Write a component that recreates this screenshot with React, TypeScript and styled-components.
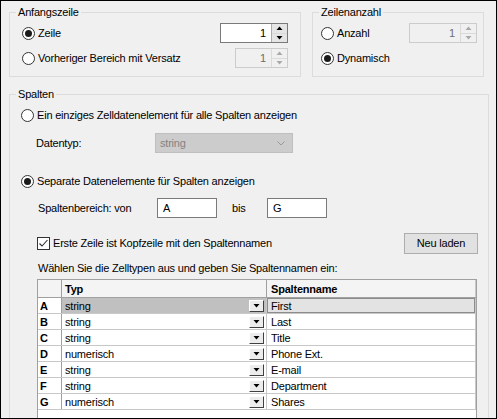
import React from "react";
import styled, { createGlobalStyle } from "styled-components";

const GlobalStyle = createGlobalStyle`
  html, body { margin: 0; padding: 0; background: #f0f0f0; }
  body {
    font-family: "Liberation Sans", Arial, sans-serif;
    font-size: 11px;
    letter-spacing: -0.2px;
    color: #000;
  }
  * { box-sizing: border-box; }
`;

const Frame = styled.div`
  width: 497px;
  height: 419px;
  border: 1px solid #000;
  background: #f0f0f0;
  padding: 5px 8px 0 8px;
  overflow: hidden;
  display: flex;
  flex-direction: column;
  gap: 11px;
`;

const TopRow = styled.div`
  display: flex;
  gap: 11px;
`;

const Group = styled.fieldset<{ $width: number }>`
  margin: 0;
  padding: 0;
  min-width: 0;
  width: ${(p) => p.$width}px;
  border: 1px solid #dcdcdc;
  flex-shrink: 0;
`;

const Legend = styled.legend`
  margin-left: 6px;
  padding: 0 2px;
  line-height: 13px;
  font-size: 11px;
`;

const GroupBody = styled.div<{ $pad: string }>`
  padding: ${(p) => p.$pad};
  display: flex;
  flex-direction: column;
`;

const Row = styled.div<{ $gap?: number; $indent?: number }>`
  display: flex;
  align-items: center;
  height: 20px;
  margin-top: ${(p) => p.$gap ?? 0}px;
  padding-left: ${(p) => p.$indent ?? 0}px;
  justify-content: space-between;
`;

const Left = styled.div`
  display: flex;
  align-items: center;
`;

/* radio */
const RadioLabel = styled.label`
  display: inline-flex;
  align-items: center;
  gap: 3px;
  white-space: nowrap;
`;

const RadioCircle = styled.span<{ $checked?: boolean }>`
  width: 13px;
  height: 13px;
  border-radius: 50%;
  border: 1px solid #333;
  background: #fff;
  display: inline-flex;
  align-items: center;
  justify-content: center;
  &::after {
    content: "";
    width: 7px;
    height: 7px;
    border-radius: 50%;
    background: ${(p) => (p.$checked ? "#1a1a1a" : "transparent")};
  }
`;

const Radio = ({ label, checked }: { label: string; checked?: boolean }) => (
  <RadioLabel>
    <RadioCircle $checked={checked} />
    <span>{label}</span>
  </RadioLabel>
);

/* spin box */
const SpinBox = styled.div<{ $width: number; $disabled?: boolean }>`
  width: ${(p) => p.$width}px;
  height: 20px;
  display: flex;
  border: 1px solid ${(p) => (p.$disabled ? "#cccccc" : "#7a7a7a")};
  background: ${(p) => (p.$disabled ? "#f0f0f0" : "#fff")};
`;

const SpinValue = styled.div<{ $disabled?: boolean }>`
  flex: 1;
  text-align: right;
  padding-right: 5px;
  line-height: 18px;
  color: ${(p) => (p.$disabled ? "#6d6d6d" : "#000")};
`;

const SpinButtons = styled.div<{ $disabled?: boolean }>`
  width: 16px;
  display: flex;
  flex-direction: column;
  border-left: 1px solid ${(p) => (p.$disabled ? "#dadada" : "#acacac")};
  background: ${(p) => (p.$disabled ? "#f0f0f0" : "#e5e5e5")};
`;

const SpinButton = styled.div<{ $disabled?: boolean }>`
  flex: 1;
  display: flex;
  align-items: center;
  justify-content: center;
  & + & {
    border-top: 1px solid ${(p) => (p.$disabled ? "#dadada" : "#acacac")};
  }
`;

const Arrow = ({ up, color }: { up?: boolean; color: string }) => (
  <svg width="7" height="4" viewBox="0 0 7 4">
    <polygon points={up ? "0.5,4 3.5,0.5 6.5,4" : "0.5,0 3.5,3.5 6.5,0"} fill={color} />
  </svg>
);

const Spinner = ({ width, disabled }: { width: number; disabled?: boolean }) => {
  const c = disabled ? "#a8a8a8" : "#000";
  return (
    <SpinBox $width={width} $disabled={disabled}>
      <SpinValue $disabled={disabled}>1</SpinValue>
      <SpinButtons $disabled={disabled}>
        <SpinButton $disabled={disabled}>
          <Arrow up color={c} />
        </SpinButton>
        <SpinButton $disabled={disabled}>
          <Arrow color={c} />
        </SpinButton>
      </SpinButtons>
    </SpinBox>
  );
};

/* fields */
const FieldLabel = styled.span<{ $width: number; $pad?: number }>`
  width: ${(p) => p.$width}px;
  padding-left: ${(p) => p.$pad ?? 0}px;
  flex-shrink: 0;
`;

const Combo = styled.div`
  width: 138px;
  height: 20px;
  background: #cccccc;
  border: 1px solid #bfbfbf;
  color: #838383;
  display: flex;
  align-items: center;
  justify-content: space-between;
  padding: 0 7px 0 4px;
`;

const TextBox = styled.div`
  width: 60px;
  height: 20px;
  background: #fff;
  border: 1px solid #7a7a7a;
  padding-left: 5px;
  line-height: 18px;
`;

const CheckLabel = styled.label`
  display: inline-flex;
  align-items: center;
  gap: 3px;
`;

const CheckBox = styled.span`
  width: 13px;
  height: 13px;
  border: 1px solid #333;
  background: #fff;
  display: inline-flex;
  align-items: center;
  justify-content: center;
`;

const Button = styled.button`
  width: 74px;
  height: 21px;
  background: #e1e1e1;
  border: 1px solid #adadad;
  font: inherit;
  letter-spacing: inherit;
  color: #000;
  padding: 0;
`;

const Hint = styled.div`
  margin-top: 8px;
  padding-left: 17px;
  line-height: 14px;
`;

/* grid */
const Grid = styled.div`
  margin: 4px 0 0 16px;
  width: 440px;
  height: 160px;
  border: 1px solid #a0a0a0;
  border-bottom: none;
  background: #fff;
`;

const GridRow = styled.div<{ $header?: boolean }>`
  display: grid;
  grid-template-columns: 24px 205px 209px;
  height: ${(p) => (p.$header ? 18 : 16)}px;
  border-bottom: 1px solid ${(p) => (p.$header ? "#a0a0a0" : "#c8c8c8")};
  background: ${(p) => (p.$header ? "#f4f4f4" : "#fff")};
`;

const HeadCell = styled.div`
  border-right: 1px solid #a0a0a0;
  font-weight: bold;
  padding-left: 2px;
  display: flex;
  align-items: center;
`;

const TypeCell = styled.div<{ $selected?: boolean; $header?: boolean }>`
  border-right: 1px solid ${(p) => (p.$header ? "#a0a0a0" : "#c8c8c8")};
  background: ${(p) => (p.$selected ? "#c0c0c0" : "transparent")};
  font-weight: ${(p) => (p.$header ? "bold" : "normal")};
  display: flex;
  align-items: center;
  justify-content: space-between;
  padding: 0 2px 0 3px;
`;

const NameCell = styled.div<{ $selected?: boolean; $header?: boolean }>`
  border-right: 1px solid #c8c8c8;
  background: ${(p) => (p.$selected ? "#e3e3e3" : "transparent")};
  box-shadow: ${(p) => (p.$selected ? "inset 0 0 0 1px #8c8c8c" : "none")};
  font-weight: ${(p) => (p.$header ? "bold" : "normal")};
  display: flex;
  align-items: center;
  padding-left: 4px;
`;

const DropButton = styled.span`
  width: 15px;
  height: 12px;
  background: #ececec;
  border: 1px solid;
  border-color: #fff #404040 #404040 #fff;
  display: inline-flex;
  align-items: center;
  justify-content: center;
`;

const rows: [string, string, string][] = [
  ["A", "string", "First"],
  ["B", "string", "Last"],
  ["C", "string", "Title"],
  ["D", "numerisch", "Phone Ext."],
  ["E", "string", "E-mail"],
  ["F", "string", "Department"],
  ["G", "numerisch", "Shares"],
];

export default function App() {
  return (
    <>
      <GlobalStyle />
      <Frame>
        <TopRow>
          <Group $width={292}>
            <Legend>Anfangszeile</Legend>
            <GroupBody $pad="4px 12px 8px 12px">
              <Row>
                <Radio label="Zeile" checked />
                <Spinner width={68} />
              </Row>
              <Row $gap={5}>
                <Radio label="Vorheriger Bereich mit Versatz" />
                <Spinner width={53} disabled />
              </Row>
            </GroupBody>
          </Group>
          <Group $width={172}>
            <Legend>Zeilenanzahl</Legend>
            <GroupBody $pad="4px 6px 8px 8px">
              <Row>
                <Radio label="Anzahl" />
                <Spinner width={68} disabled />
              </Row>
              <Row $gap={5}>
                <Radio label="Dynamisch" checked />
              </Row>
            </GroupBody>
          </Group>
        </TopRow>

        <Group $width={480}>
          <Legend>Spalten</Legend>
          <GroupBody $pad="4px 10px 0 11px">
            <Row>
              <Radio label="Ein einziges Zelldatenelement für alle Spalten anzeigen" />
            </Row>
            <Row $gap={8} $indent={15}>
              <Left>
                <FieldLabel $width={119}>Datentyp:</FieldLabel>
                <Combo>
                  <span>string</span>
                  <svg width="8" height="5" viewBox="0 0 8 5">
                    <polyline points="0.5,0.5 4,4 7.5,0.5" fill="none" stroke="#9a9a9a" strokeWidth="1" />
                  </svg>
                </Combo>
              </Left>
            </Row>
            <Row $gap={18}>
              <Radio label="Separate Datenelemente für Spalten anzeigen" checked />
            </Row>
            <Row $gap={7} $indent={17}>
              <Left>
                <FieldLabel $width={119}>Spaltenbereich: von</FieldLabel>
                <TextBox>A</TextBox>
                <FieldLabel $width={50} $pad={15}>
                  bis
                </FieldLabel>
                <TextBox>G</TextBox>
              </Left>
            </Row>
            <Row $gap={15} $indent={16}>
              <CheckLabel>
                <CheckBox>
                  <svg width="11" height="11" viewBox="0 0 11 11">
                    <polyline points="1.5,5.5 4,8 9.5,2" fill="none" stroke="#333" strokeWidth="1.1" />
                  </svg>
                </CheckBox>
                <span>Erste Zeile ist Kopfzeile mit den Spaltennamen</span>
              </CheckLabel>
              <Button>Neu laden</Button>
            </Row>
            <Hint>Wählen Sie die Zelltypen aus und geben Sie Spaltennamen ein:</Hint>
            <Grid>
              <GridRow $header>
                <HeadCell />
                <TypeCell $header>Typ</TypeCell>
                <NameCell $header>Spaltenname</NameCell>
              </GridRow>
              {rows.map(([key, type, name], i) => (
                <GridRow key={key}>
                  <HeadCell>{key}</HeadCell>
                  <TypeCell $selected={i === 0}>
                    <span>{type}</span>
                    <DropButton>
                      <Arrow color="#000" />
                    </DropButton>
                  </TypeCell>
                  <NameCell $selected={i === 0}>{name}</NameCell>
                </GridRow>
              ))}
            </Grid>
          </GroupBody>
        </Group>
      </Frame>
    </>
  );
}
